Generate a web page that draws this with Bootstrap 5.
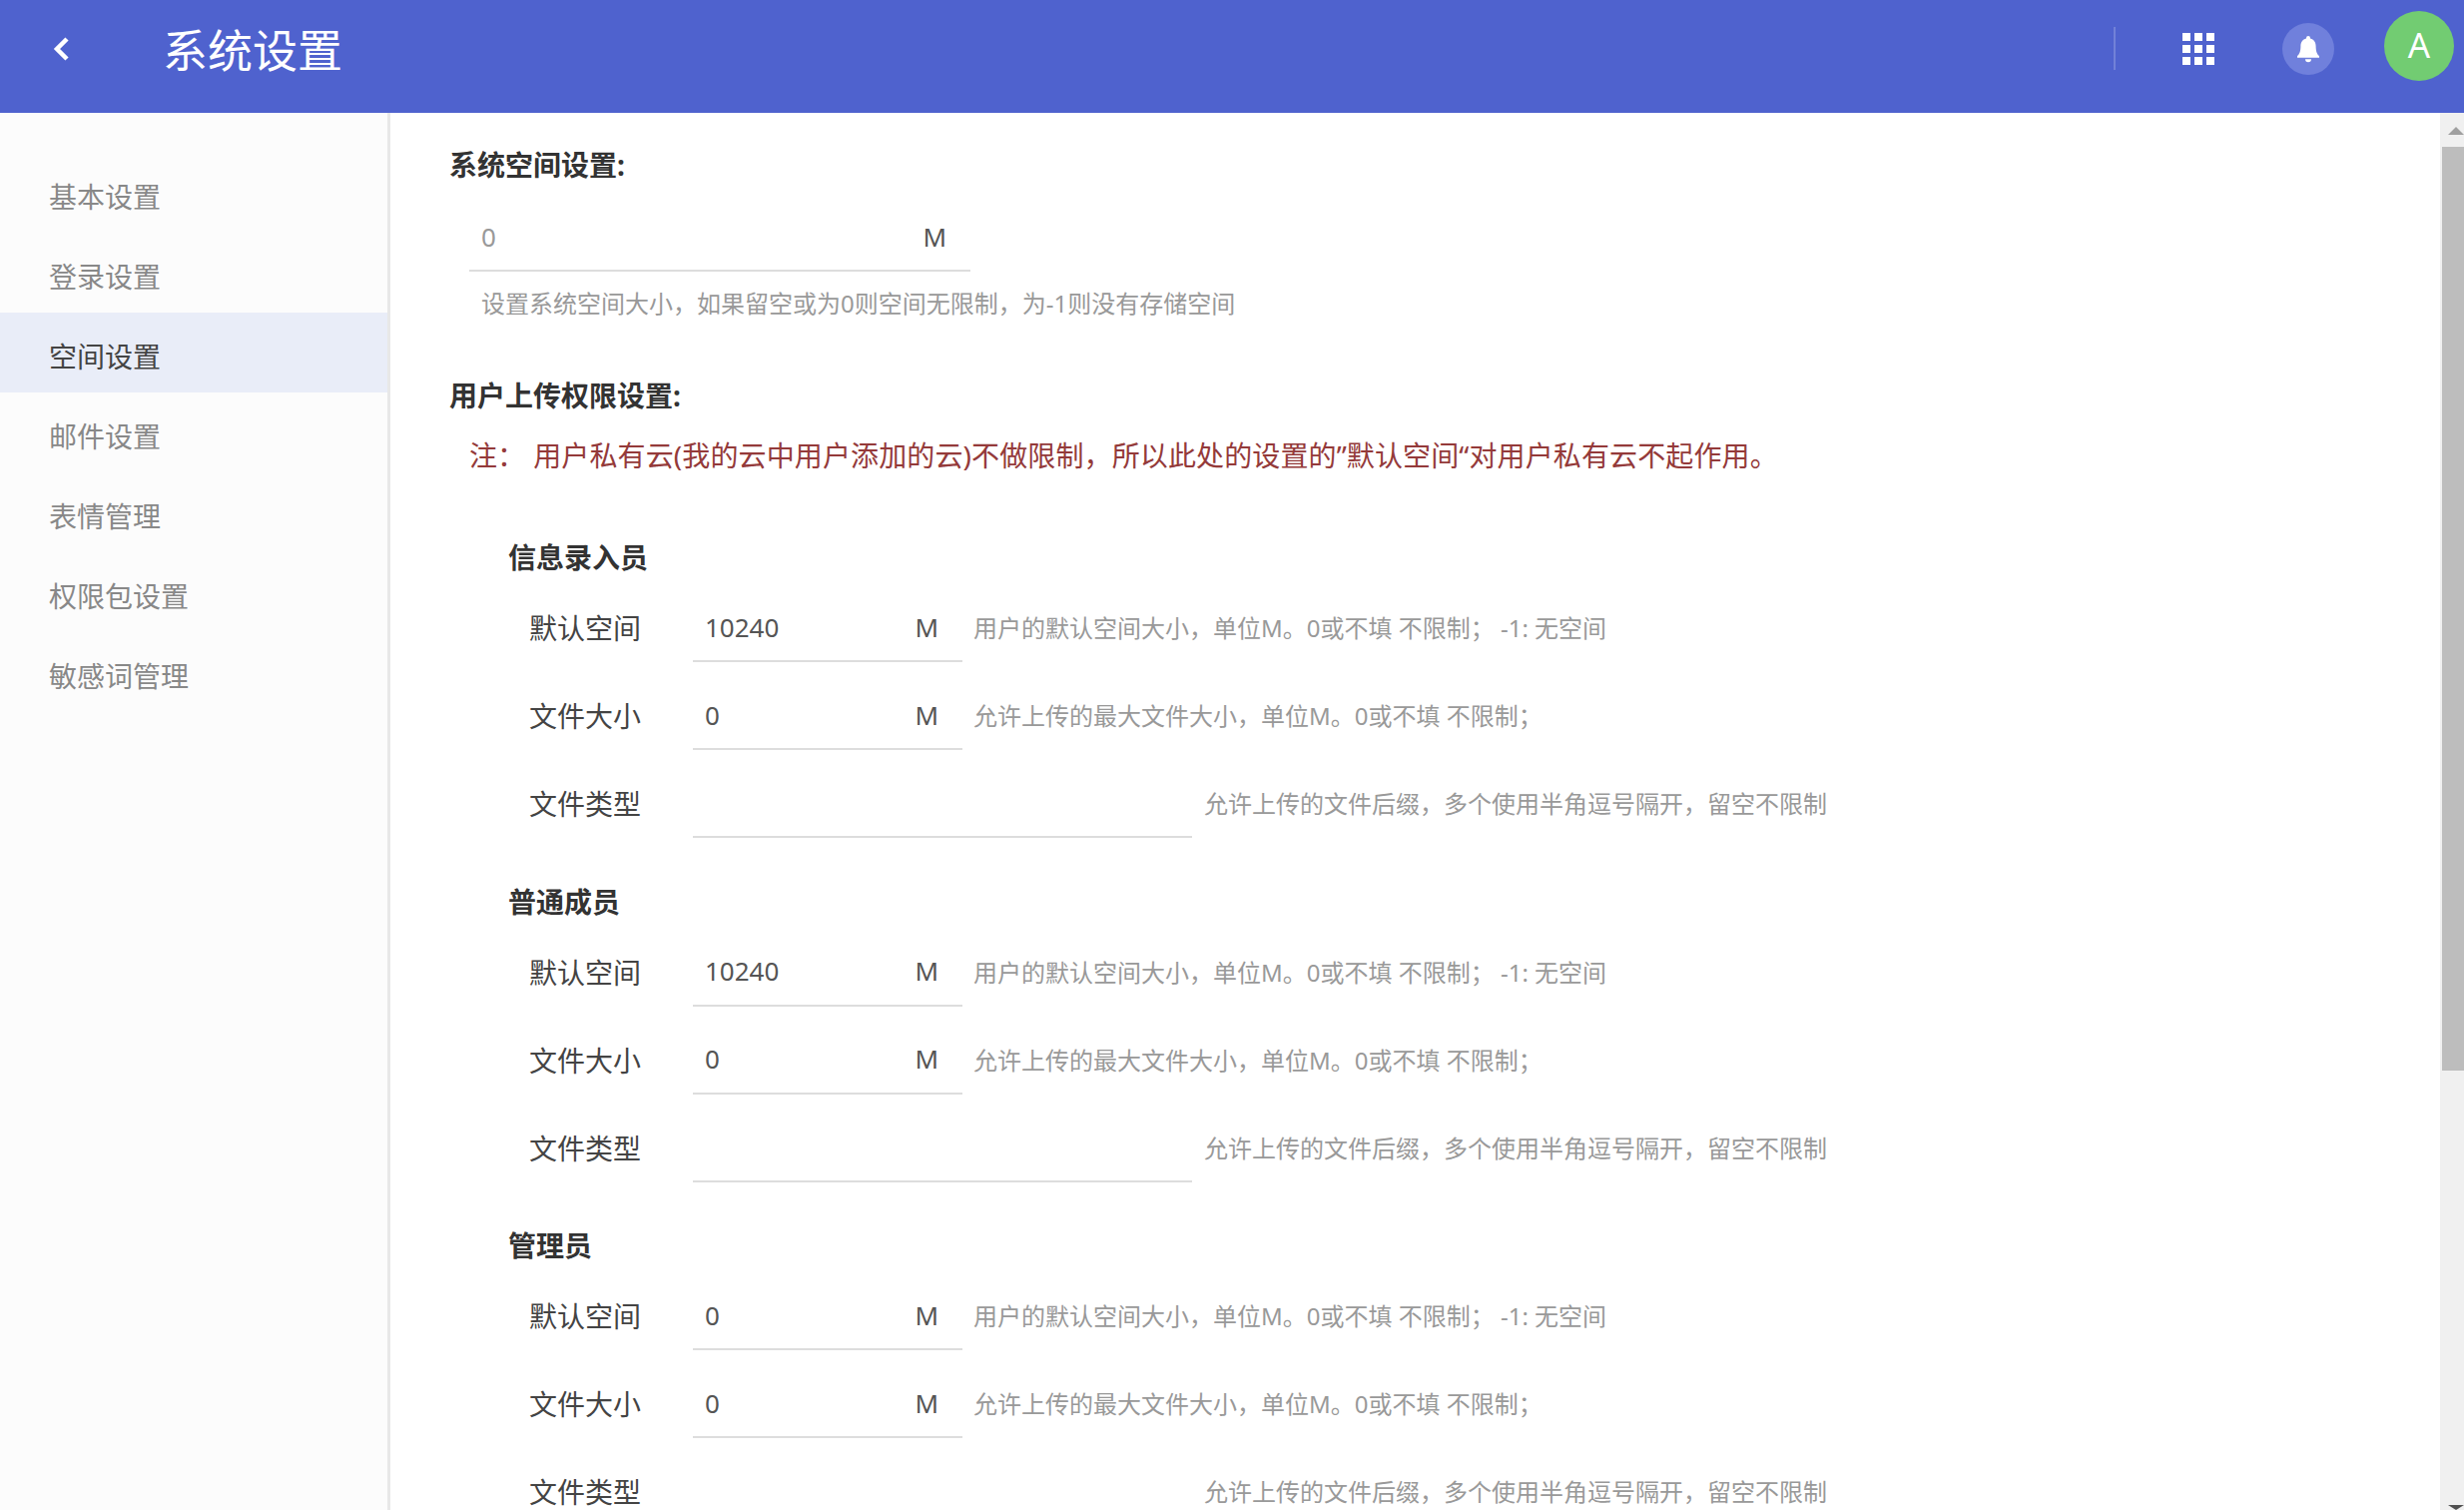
<!DOCTYPE html>
<html lang="zh-CN">
<head>
<meta charset="UTF-8">
<meta name="viewport" content="width=device-width, initial-scale=1.0">
<title>系统设置</title>
<link href="https://cdn.jsdelivr.net/npm/bootstrap@5.3.0/dist/css/bootstrap.min.css" rel="stylesheet">
<style>
html, body { height: 100%; overflow: hidden; }
body { font-family: "Noto Sans", "Noto Sans CJK SC", sans-serif; font-size: 28px; color: #444; background: #fff; }
.top-bar { height: 113px; background: #4f62ce; padding: 0; flex-wrap: nowrap; }
.back-btn { width: 121px; padding-left: 52px; padding-bottom: 16px; display: flex; }
.page-title { font-size: 45px; line-height: 1; color: #fff; margin: 0; font-weight: 400; padding-bottom: 12px; margin-left: 42px; }
.top-tools { padding-right: 10px; padding-bottom: 16px; }
.tool-divider { width: 2px; height: 43px; background: #7281d8; margin-right: 67px; }
.apps-grid { display: grid; grid-template-columns: repeat(3, 8px); grid-auto-rows: 8px; gap: 4px; margin-right: 68px; }
.apps-grid i { background: #fff; }
.bell-btn { width: 52px; height: 52px; border-radius: 50%; background: #7080dc; margin-right: 50px; }
.user-avatar { width: 70px; height: 70px; border-radius: 50%; background: #72cc72; color: #fff; font-size: 35px; margin-top: -6px; }
.page-body { height: 1399px; }
.side-menu { width: 391px; background: #fcfcfc; border-right: 3px solid #e8e8e8; padding-top: 40px; flex-shrink: 0; }
.side-menu .list-group-item { height: 80px; line-height: 88px; padding: 0 0 0 49px; border: 0; background: transparent; color: #888; font-size: 28px; border-radius: 0; }
.side-menu .list-group-item.active { background: #e9edf8; color: #444; margin-top: 0; }
.main-pane { padding: 32px 0 0 59px; overflow: hidden; }
.sec-title { font-size: 28px; font-weight: 700; color: #333; line-height: 40px; margin: 0; }
.sys-field { width: 502px; height: 68px; margin: 19px 0 0 20px; border-bottom: 2px solid #ddd; padding: 0 24px 0 12px; }
.plain-input { border: 0; padding: 0; background: transparent; outline: 0; width: 100%; min-width: 0; font-size: 26px; color: #555; box-shadow: none; border-radius: 0; }
.plain-input:focus { box-shadow: none; background: transparent; }
.plain-input::placeholder { color: #999; opacity: 1; }
.unit-text { font-size: 26px; color: #555; flex-shrink: 0; }
.help-text { font-size: 24px; color: #999; white-space: nowrap; }
.sys-help { margin: 15px 0 0 32px; line-height: 34px; }
.second-title { margin-top: 55px; }
.note-text { font-size: 28px; color: #943a3a; margin: 20px 0 0 20px; line-height: 40px; white-space: nowrap; letter-spacing: .12px; }
.note-text span { margin-right: 8px; }
.role-list { margin: 60px 0 0 59px; }
.role-name { font-size: 28px; font-weight: 700; color: #333; line-height: 44px; margin: 0 0 15px; }
.role-group { padding-bottom: 21.5px; }
.set-row { height: 68px; margin-bottom: 20px; }
.set-label { width: 185px; padding-left: 21px; font-size: 28px; color: #444; flex-shrink: 0; }
.set-field { height: 68px; border-bottom: 2px solid #ddd; padding: 0 24px 0 12px; width: 270px; flex-shrink: 0; margin-right: 11px; }
.set-field.wide-field { width: 500px; margin-right: 12px; }
.fake-scroll { width: 24px; background: #f0f0f0; flex-shrink: 0; padding-left: 2px; }
.scroll-up { height: 34px; position: relative; }
.scroll-up::after { content: ""; position: absolute; right: 0; top: 14px; border: 8px solid transparent; border-top: 0; border-bottom-color: #a0a0a0; }
.scroll-thumb { height: 925px; background: #bdbdbd; }
.scroll-down { margin-top: auto; border: 8px solid transparent; border-bottom: 0; border-top: 5px solid #505050; align-self: flex-end; width: 0; height: 0; }
</style>
</head>
<body>
<nav class="navbar top-bar">
    <a class="back-btn" href="#" aria-label="返回">
        <svg width="18" height="26" viewBox="0 0 18 26" fill="none" stroke="#fff" stroke-width="4.500"><path d="M15 3 L5 13 L15 23"/></svg>
    </a>
    <h1 class="page-title">系统设置</h1>
    <div class="top-tools ms-auto d-flex align-items-center">
        <div class="tool-divider"></div>
        <div class="apps-grid"><i></i><i></i><i></i><i></i><i></i><i></i><i></i><i></i><i></i></div>
        <div class="bell-btn d-flex align-items-center justify-content-center">
            <svg width="24" height="28" viewBox="0 0 24 28" fill="#fff"><path d="M12 1a2 2 0 0 1 2 2v.6c3.6.9 5.6 3.9 5.6 7.6 0 5 1 7.6 3.4 10V22.800H1v-1.600c2.400-2.400 3.400-5 3.400-10 0-3.700 2-6.700 5.600-7.600V3a2 2 0 0 1 2-2z"/><path d="M9 24.200h6a3 3 0 0 1-6 0z"/></svg>
        </div>
        <div class="user-avatar d-flex align-items-center justify-content-center">A</div>
    </div>
</nav>
<div class="page-body d-flex">
    <div class="side-menu list-group list-group-flush">
        <a href="#" class="list-group-item">基本设置</a>
        <a href="#" class="list-group-item">登录设置</a>
        <a href="#" class="list-group-item active">空间设置</a>
        <a href="#" class="list-group-item">邮件设置</a>
        <a href="#" class="list-group-item">表情管理</a>
        <a href="#" class="list-group-item">权限包设置</a>
        <a href="#" class="list-group-item">敏感词管理</a>
    </div>
    <main class="main-pane flex-grow-1">
        <h2 class="sec-title">系统空间设置:</h2>
        <div class="sys-field d-flex align-items-center">
            <input class="form-control plain-input" placeholder="0">
            <span class="unit-text">M</span>
        </div>
        <div class="help-text sys-help">设置系统空间大小，如果留空或为0则空间无限制，为-1则没有存储空间</div>
        <h2 class="sec-title second-title">用户上传权限设置:</h2>
        <p class="note-text"><span>注：</span>用户私有云(我的云中用户添加的云)不做限制，所以此处的设置的”默认空间“对用户私有云不起作用。</p>
        <div class="role-list" id="role-list"></div>
    </main>
    <div class="fake-scroll d-flex flex-column">
        <div class="scroll-up"></div>
        <div class="scroll-thumb"></div>
        <div class="scroll-down"></div>
    </div>
</div>
<script>
    let roles = [
        { name: '信息录入员', space: '10240', size: '0' },
        { name: '普通成员', space: '10240', size: '0' },
        { name: '管理员', space: '0', size: '0' }
    ];

    function field(value, unit) {
        return `<div class="set-field d-flex align-items-center ${unit ? '' : 'wide-field'}">
            <input class="form-control plain-input" value="${value}">
            ${unit ? '<span class="unit-text">M</span>' : ''}
        </div>`;
    }

    document.getElementById('role-list').innerHTML = roles.map(role => `
        <div class="role-group">
            <h3 class="role-name">${role.name}</h3>
            <div class="set-row d-flex align-items-center">
                <div class="set-label">默认空间</div>${field(role.space, true)}
                <div class="help-text">用户的默认空间大小，单位M。0或不填 不限制； -1: 无空间</div>
            </div>
            <div class="set-row d-flex align-items-center">
                <div class="set-label">文件大小</div>${field(role.size, true)}
                <div class="help-text">允许上传的最大文件大小，单位M。0或不填 不限制；</div>
            </div>
            <div class="set-row d-flex align-items-center">
                <div class="set-label">文件类型</div>${field('', false)}
                <div class="help-text">允许上传的文件后缀，多个使用半角逗号隔开，留空不限制</div>
            </div>
        </div>`).join('');
</script>
<script src="https://cdn.jsdelivr.net/npm/bootstrap@5.3.0/dist/js/bootstrap.bundle.min.js"></script>
</body>
</html>
